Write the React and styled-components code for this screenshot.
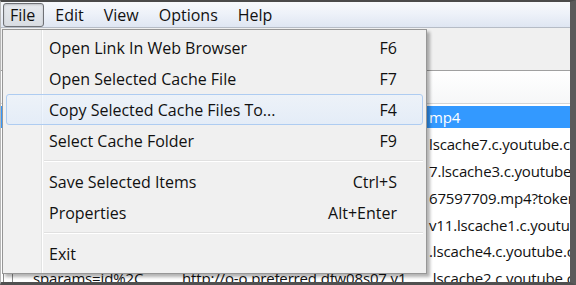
import styled, { createGlobalStyle } from "styled-components";

const GlobalStyle = createGlobalStyle`
  html, body {
    margin: 0;
    padding: 0;
    background: #fff;
  }
  body {
    font-family: "Open Sans", "Noto Sans", sans-serif;
  }
`;

const menuTitles = ["File", "Edit", "View", "Options", "Help"];

const fileMenu = [
  { label: "Open Link In Web Browser", key: "F6" },
  { label: "Open Selected Cache File", key: "F7" },
  { label: "Copy Selected Cache Files To...", key: "F4", hot: true },
  { label: "Select Cache Folder", key: "F9" },
  { sep: true },
  { label: "Save Selected Items", key: "Ctrl+S" },
  { label: "Properties", key: "Alt+Enter" },
  { sep: true },
  { label: "Exit" },
];

// only the parts of the list that the open menu leaves visible
const rows = [
  { tail: "mp4", selected: true },
  { tail: "lscache7.c.youtube.com" },
  { tail: "7.lscache3.c.youtube.com" },
  { tail: "67597709.mp4?token=" },
  { tail: "v11.lscache1.c.youtube.com" },
  { tail: ".lscache4.c.youtube.com" },
  { name: "sparams=id%2C", head: "http://o-o.preferred.dfw08s07.v1", tail: ".lscache2.c.youtube.com" },
];

export default function App() {
  return (
    <>
      <GlobalStyle />
      <Frame>
        <MenuBar>
          {menuTitles.map((t, i) => (
            <MenuTitle key={t} $open={i === 0}>{t}</MenuTitle>
          ))}
        </MenuBar>
        <Toolbar />
        <List>
          <ListHeader />
          {rows.map((r, i) => (
            <Row key={i} $selected={r.selected}>
              <Check />
              <NameCell>{r.name}</NameCell>
              <HeadCell>{r.head}</HeadCell>
              <TailCell>{r.tail}</TailCell>
            </Row>
          ))}
        </List>

        <Dropdown>
          {fileMenu.map((item, i) =>
            item.sep ? (
              <Separator key={i} />
            ) : (
              <Item key={i} $hot={item.hot}>
                <ItemLabel>{item.label}</ItemLabel>
                {item.key && <Shortcut>{item.key}</Shortcut>}
              </Item>
            )
          )}
        </Dropdown>
      </Frame>
    </>
  );
}

const Frame = styled.div`
  position: relative;
  width: 576px;
  height: 285px;
  box-sizing: border-box;
  overflow: hidden;
  background: #f0f0f0;
  border-top: 2px solid #4a4a4a;
  border-left: 1px solid #b8b8b8;
  border-right: 6px solid #5a5a5a;
  border-bottom: 3px solid #505050;
  display: flex;
  flex-direction: column;
`;

const MenuBar = styled.div`
  flex: none;
  height: 26px;
  box-sizing: border-box;
  display: flex;
  align-items: flex-start;
  padding: 1px 0 0 2px;
  background: linear-gradient(#f7f9fc 0%, #eef2f9 45%, #dfe6f2 100%);
  border-bottom: 1px solid #b6bcc6;
`;

const MenuTitle = styled.div`
  display: flex;
  align-items: center;
  box-sizing: border-box;
  padding: 0 8px 0 6px;
  margin-right: 4px;
  height: 24px;
  font-size: 16px;
  color: #111;
  border-radius: 3px;
  border: 1px solid ${(p) => (p.$open ? "#6f7176" : "transparent")};
  background: ${(p) =>
    p.$open ? "linear-gradient(#e6e9ee, #d9dde3)" : "transparent"};
  box-shadow: ${(p) => (p.$open ? "inset 0 1px 2px rgba(0,0,0,0.18)" : "none")};
`;

const Toolbar = styled.div`
  flex: none;
  height: 43px;
  box-sizing: border-box;
  background: #f0f0f0;
  border-bottom: 1px solid #a0a0a0;
`;

const List = styled.div`
  flex: 1;
  min-height: 0;
  overflow: hidden;
  background: #fff;
`;

const ListHeader = styled.div`
  height: 33px;
  box-sizing: border-box;
  background: linear-gradient(#ffffff, #f6f7f8);
  border-bottom: 1px solid #d5d5d5;
`;

const Row = styled.div`
  height: 26.8px;
  display: flex;
  align-items: center;
  font-size: 15px;
  letter-spacing: -0.15px;
  white-space: nowrap;
  color: ${(p) => (p.$selected ? "#fff" : "#111")};
  background: ${(p) =>
    p.$selected
      ? "linear-gradient(#fff 2px, #3399ff 2px, #3399ff 24px, #fff 24px)"
      : "#fff"};
`;

const Check = styled.span`
  width: 8px;
  height: 8px;
  margin: 0 6px 0 2px;
  border: 1px solid #8a8a8a;
  background: #fff;
  flex: none;
`;

const NameCell = styled.span`
  width: 149px;
  padding-left: 14px;
  overflow: hidden;
  flex: none;
`;

const HeadCell = styled.span`
  width: 247px;
  overflow: hidden;
  flex: none;
`;

const TailCell = styled.span`
  flex: none;
`;

const Dropdown = styled.div`
  position: absolute;
  top: 27px;
  left: 1px;
  width: 425px;
  height: 245px;
  box-sizing: border-box;
  padding: 2px 3px;
  background: linear-gradient(90deg, #f1f1f1 0, #f1f1f1 38px, #e2e3e3 38px, #e2e3e3 39px, #fff 39px, #fff 40px, #f0f0f0 40px);
  border: 1px solid #979797;
  box-shadow: 3px 3px 3px rgba(0, 0, 0, 0.3);
  display: flex;
  flex-direction: column;
  z-index: 2;
`;

const Item = styled.div`
  height: 31px;
  flex: none;
  box-sizing: border-box;
  display: flex;
  align-items: center;
  padding: 0 25px 0 42px;
  font-size: 16px;
  color: #111;
  border-radius: 3px;
  border: 1px solid ${(p) => (p.$hot ? "#aeccf1" : "transparent")};
  background: ${(p) =>
    p.$hot ? "linear-gradient(rgba(235,243,253,0.6), rgba(220,234,252,0.6))" : "transparent"};
`;

const ItemLabel = styled.span`
  flex: 1;
`;

const Shortcut = styled.span`
  text-align: right;
`;

const Separator = styled.div`
  height: 10px;
  flex: none;
  margin-left: 38px;
  background: linear-gradient(transparent 4px, #e0e0e0 4px, #e0e0e0 5px, #fff 5px, #fff 6px, transparent 6px);
`;
